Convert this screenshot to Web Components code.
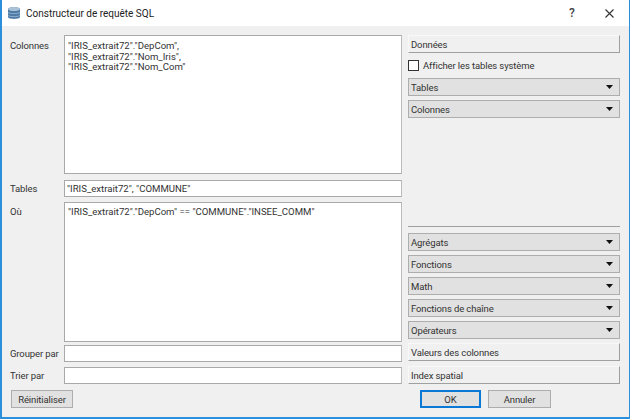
<!DOCTYPE html>
<html><head><meta charset="utf-8"><style>
html,body{margin:0;padding:0;background:#f0f0f0}
body{width:630px;height:419px;overflow:hidden;font:9.5px Roboto,sans-serif;letter-spacing:-.12px;color:#333}
</style></head><body>
<template id="t-win"><style>
:host{display:flex;flex-direction:column;width:630px;height:419px;box-sizing:border-box;border:1px solid #2b8fdc;border-top:none;border-bottom-width:2px;border-left-width:2px;background:#f0f0f0}
.bar{height:26px;background:#fff;display:flex;align-items:center;flex:none;padding-left:5px;color:#222;font-size:10px;letter-spacing:0}
svg{flex:none}
.t{margin-left:5px;flex:1}
.q{width:12px;text-align:center;font-size:12px;font-weight:500;margin-right:27px;color:#444}
.x{margin-right:15px}
</style>
<div class="bar"><svg width="14" height="14" viewBox="0 0 14 14"><path d="M1 3c0-2.500 12-2.500 12 0v8c0 2.500-12 2.500-12 0z" fill="#4d7ba6"/><ellipse cx="7" cy="3" rx="6" ry="2" fill="#a9c2d8"/><path d="M1 6.500c2 1.500 10 1.500 12 0M1 9.500c2 1.500 10 1.500 12 0" stroke="#8fb0cc" stroke-width="1" fill="none"/></svg><span class="t"><slot name="title"></slot></span><span class="q">?</span><svg class="x" width="9" height="9" viewBox="0 0 9 9"><path d="M.5.5l8 8M8.500.5l-8 8" stroke="#333" stroke-width="1.100"/></svg></div>
<slot></slot></template>

<template id="t-form"><style>
:host{flex:1;display:grid;grid-template-columns:54px 338px 6px 212px;grid-template-rows:145px 22px 143px 22px 23px 1fr;padding:9px 0 0 8px;box-sizing:border-box}
.lb{line-height:17px;grid-column:1;white-space:nowrap}
.top{padding-top:1px}
q-field{grid-column:2;height:17px;font-size:9.6px;letter-spacing:0}
q-field[multi]{height:140px}
.right1{grid-column:4;grid-row:1/3;display:flex;flex-direction:column}
.right2{grid-column:4;grid-row:3;display:flex;flex-direction:column;gap:4px;padding-top:24px}
.sep{height:1px;background:#a0a0a0;margin-bottom:2px}
q-btn[flat]{grid-column:4}
.foot{grid-column:1/5;grid-row:6;display:flex;justify-content:space-between;align-items:flex-start;padding:0 69px 0 1px}
.foot div{display:flex;gap:7px}
</style>
<div class="lb" style="grid-row:1;padding-top:2px">Colonnes</div><q-field multi style="grid-row:1;height:139px">"IRIS_extrait72"."DepCom",<br>"IRIS_extrait72"."Nom_Iris",<br>"IRIS_extrait72"."Nom_Com"</q-field>
<div class="right1"><q-btn flat>Données</q-btn><q-check>Afficher les tables système</q-check><q-combo>Tables</q-combo><q-combo style="margin-top:4px">Colonnes</q-combo></div>
<div class="lb" style="grid-row:2">Tables</div><q-field style="grid-row:2">"IRIS_extrait72", "COMMUNE"</q-field>
<div class="lb top" style="grid-row:3">Où</div><q-field multi style="grid-row:3;padding-top:4px">"IRIS_extrait72"."DepCom" == "COMMUNE"."INSEE_COMM"</q-field>
<div class="right2"><div class="sep"></div><q-combo>Agrégats</q-combo><q-combo>Fonctions</q-combo><q-combo>Math</q-combo><q-combo>Fonctions de chaîne</q-combo><q-combo>Opérateurs</q-combo></div>
<div class="lb" style="grid-row:4">Grouper par</div><q-field style="grid-row:4"></q-field><q-btn flat style="grid-row:4;margin-top:-2px">Valeurs des colonnes</q-btn>
<div class="lb" style="grid-row:5">Trier par</div><q-field style="grid-row:5"></q-field><q-btn flat style="grid-row:5;margin-top:-1px">Index spatial</q-btn>
<div class="foot"><q-btn style="width:62px">Réinitialiser</q-btn><div><q-btn focus style="width:61px">OK</q-btn><q-btn style="width:63px">Annuler</q-btn></div></div>
</template>

<script>
function def(name,css,html){customElements.define(name,class extends HTMLElement{constructor(){super();this.attachShadow({mode:'open'}).innerHTML='<style>'+css+'</style>'+html}})}
function tpl(name,id){customElements.define(name,class extends HTMLElement{constructor(){super();this.attachShadow({mode:'open'}).appendChild(document.getElementById(id).content.cloneNode(true))}})}
def('q-field',`:host{display:block;box-sizing:border-box;background:#fff;border:1px solid #a9a9a9;border-right-color:#bbb;padding:0 2px;line-height:15px;white-space:nowrap;overflow:hidden}
:host([multi]){padding:5px 3px;line-height:10.5px}`,'<slot></slot>');
def('q-btn',`:host{display:flex;align-items:center;justify-content:center;box-sizing:border-box;height:18px;background:#e1e1e1;border:1px solid #adadad}
:host([flat]){justify-content:flex-start;padding:0 2px;background:#f0f0f0;border:none;border-top:1px solid #f8f8f8;border-left:1px solid #f8f8f8;border-right:1px solid #a0a0a0;border-bottom:1px solid #a0a0a0}
:host([focus]){border:2px solid #0a78d7}`,'<slot></slot>');
def('q-check',`:host{display:flex;align-items:center;height:25px}
i{width:11px;height:11px;box-sizing:border-box;border:1px solid #333;background:#fff;margin-right:4px;display:block;flex:none}`,'<i></i><slot></slot>');
def('q-combo',`:host{display:flex;align-items:center;justify-content:space-between;box-sizing:border-box;height:18px;padding:0 4px 0 2px;background:#e1e1e1;border:1px solid #adadad}
svg{display:block;margin-right:2px}`,'<slot></slot><svg width="7" height="4" viewBox="0 0 7 4"><path d="M0 0h7L3.500 4z" fill="#111"/></svg>');
tpl('q-win','t-win');tpl('q-form','t-form');
</script>
<q-win><span slot="title">Constructeur de requête SQL</span><q-form></q-form></q-win>
</body></html>
